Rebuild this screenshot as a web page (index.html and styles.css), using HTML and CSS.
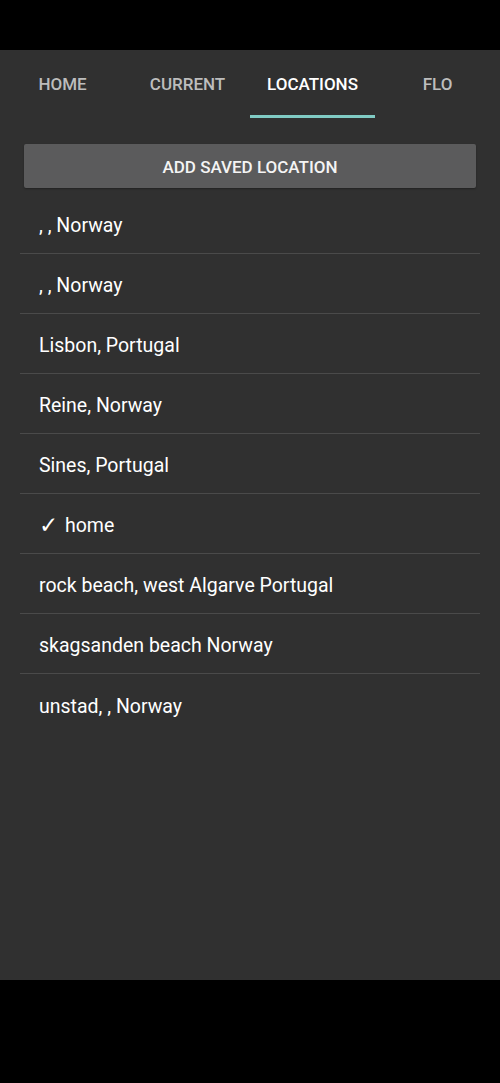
FILE: index.html
```html
<!DOCTYPE html>
<html lang="en">
<head>
<meta charset="UTF-8" />
<meta name="viewport" content="width=device-width, initial-scale=1.0" />
<title>Locations</title>
<link rel="stylesheet" href="styles.css">
</head>
<body>
<div class="status-bar"></div>
<div class="screen">
<nav class="tabs">
<div class="tab">Home</div>
<div class="tab">Current</div>
<div class="tab active">Locations</div>
<div class="tab">Flo</div>
</nav>
<button class="add-btn">Add saved location</button>
<ul class="locations">
<li class="location">, , Norway</li>
<li class="location">, , Norway</li>
<li class="location">Lisbon, Portugal</li>
<li class="location">Reine, Norway</li>
<li class="location">Sines, Portugal</li>
<li class="location"><span class="check">✓</span>home</li>
<li class="location">rock beach, west Algarve Portugal</li>
<li class="location">skagsanden beach Norway</li>
<li class="location">unstad, , Norway</li>
</ul>
</div>
<div class="nav-bar"></div>
</body>
</html>
```

FILE: styles.css
```css
* {
margin: 0;
padding: 0;
box-sizing: border-box;
}
body {
width: 100%;
height: 100vh;
background: #000;
font-family: Roboto, "Noto Sans", sans-serif;
color: #fff;
display: flex;
flex-direction: column;
}
.status-bar {
height: 50px;
background: #000;
}
.screen {
height: 930px;
background: #303030;
display: flex;
flex-direction: column;
}
.nav-bar {
flex: 1;
background: #000;
}
.tabs {
display: flex;
height: 68px;
}
.tab {
flex: 1;
display: flex;
align-items: center;
justify-content: center;
padding-top: 3px;
font-size: 17px;
font-weight: 500;
text-transform: uppercase;
color: #bdbdbd;
border-bottom: 3px solid transparent;
}
.tab.active {
color: #fff;
border-bottom-color: #80cbc4;
}
.add-btn {
margin: 26px 24px 0;
height: 44px;
padding-top: 2px;
border: none;
border-radius: 2px;
background: #5b5b5c;
color: #f4f4f4;
font-family: inherit;
font-size: 17px;
font-weight: 500;
text-transform: uppercase;
box-shadow: 0 1px 2px rgba(0, 0, 0, 0.3);
}
ul.locations {
list-style-type: none;
margin: 6px 20px 0;
}
.location {
height: 60px;
display: flex;
align-items: center;
padding-left: 19px;
padding-top: 4px;
font-size: 19.5px;
border-bottom: 1px solid #4a4a4a;
}
.location:last-child {
border-bottom: none;
}
.check {
font-size: 23px;
margin-right: 7px;
}
```
